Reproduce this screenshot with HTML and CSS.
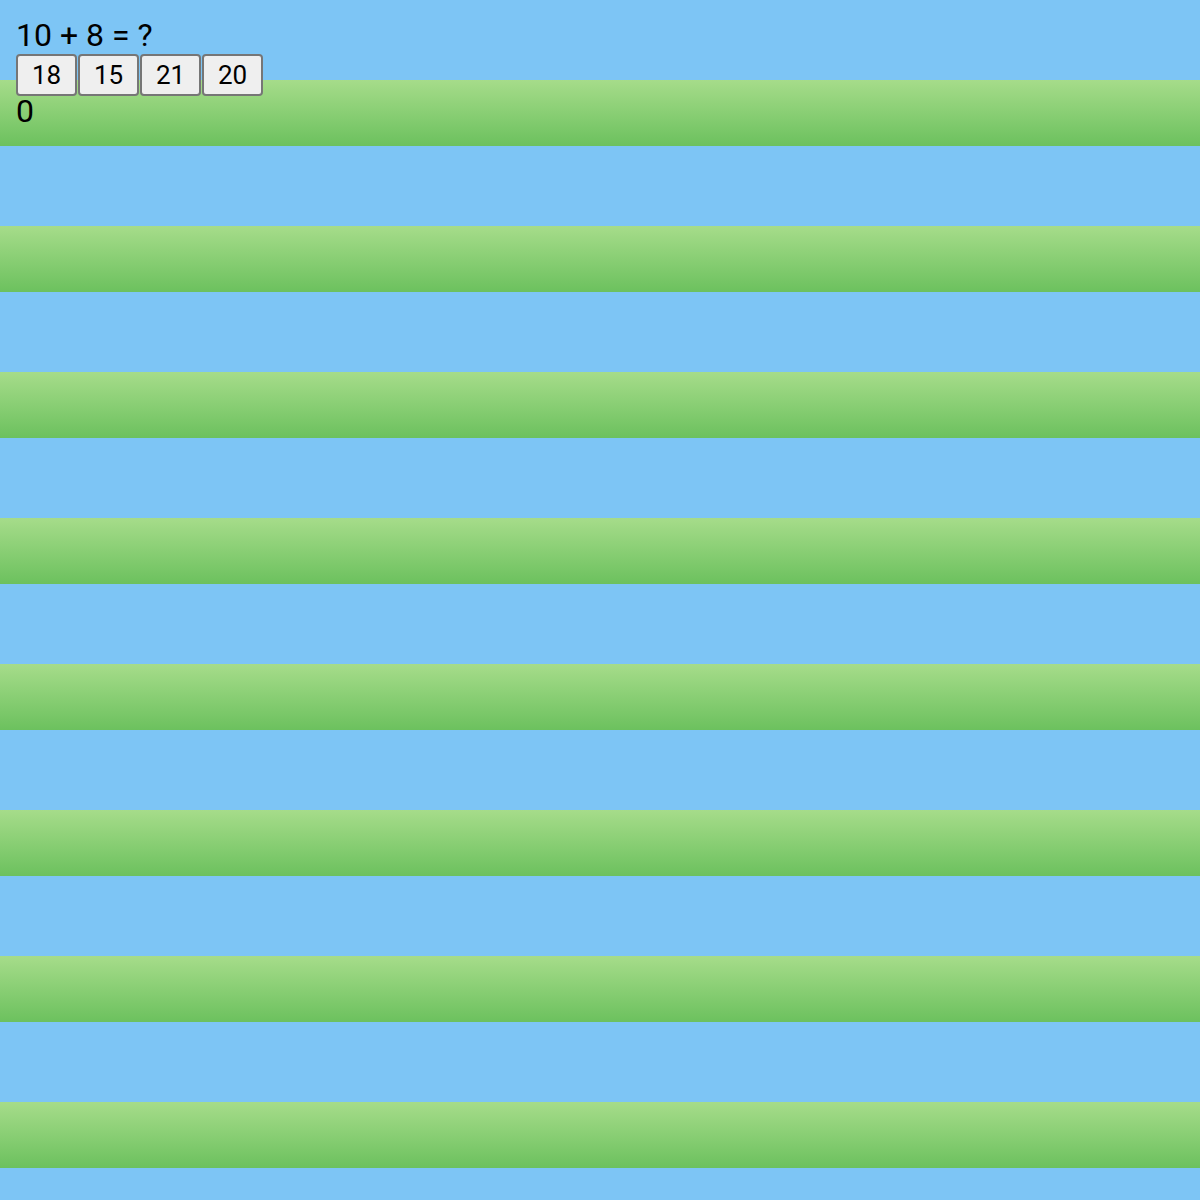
FILE: index.html
```html
<!DOCTYPE html>
<html lang="en">
<head>
  <meta charset="UTF-8" />
  <title>Math Quiz</title>
  <link rel="stylesheet" href="styles.css">
</head>
<body>

<div class="quiz">
  <div class="question">10 + 8 = ?</div>
  <div class="answers">
    <button class="answer">18</button>
    <button class="answer">15</button>
    <button class="answer">21</button>
    <button class="answer">20</button>
  </div>
  <div class="score">0</div>
</div>

</body>
</html>
```

FILE: styles.css
```css
html, body {
  min-height: 100%;
}

body {
  margin: 0;
  font-family: Roboto, 'Noto Sans', sans-serif;
  color: #000;
  background-color: #7dc5f5;
  /* grass stripes, 80px sky then 66px of green */
  background-image: linear-gradient(to bottom,
    transparent 0, transparent 80px,
    #a6dc8a 80px, #6cc15e 146px);
  background-size: 100% 146px;
  background-repeat: repeat;
  height: 1200px;
}

.quiz {
  padding: 17px 16px;
}

.question {
  font-size: 32px;
  line-height: 37px;
}

.answers {
  display: flex;
  gap: 1px;
  margin-top: 0;
}

.answer {
  width: 61px;
  height: 42px;
  padding: 0 0 1px;
  font-family: Roboto, sans-serif;
  font-size: 26px;
  color: #000;
  background: #efefef;
  border: 2px solid #767676;
  border-radius: 4px;
  cursor: pointer;
}

.score {
  margin-top: -3px;
  font-size: 32px;
  line-height: 37px;
}
```
